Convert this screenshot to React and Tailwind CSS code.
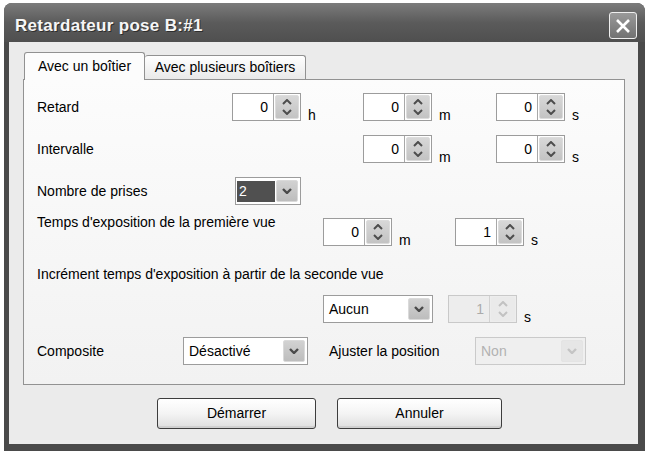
import React from 'react';

// Small XP-style widgets, greyscale

function ChevronUp({ color = '#4a4a4a' }) {
  return (
    <svg width="10" height="6" viewBox="0 0 10 6">
      <path d="M1 5 L5 1 L9 5" fill="none" stroke={color} strokeWidth="2" />
    </svg>
  );
}

function ChevronDown({ color = '#4a4a4a', width = 2 }) {
  return (
    <svg width="10" height="6" viewBox="0 0 10 6">
      <path d="M1 1 L5 5 L9 1" fill="none" stroke={color} strokeWidth={width} />
    </svg>
  );
}

function Spin({ value, disabled }) {
  return (
    <div
      className={
        disabled
          ? 'flex h-[28px] w-[69px] shrink-0 border border-[#c9c9c9] bg-[#ededed]'
          : 'flex h-[28px] w-[69px] shrink-0 border border-[#9c9c9c] bg-white'
      }
    >
      <div
        className={
          disabled
            ? 'flex flex-1 items-center justify-end pr-[5px] text-[14px] text-[#ababab]'
            : 'flex flex-1 items-center justify-end pr-[5px] text-[14px] text-black'
        }
      >
        {value}
      </div>
      <div
        className={
          disabled
            ? 'flex w-[27px] border-l border-[#d2d2d2] p-[1px]'
            : 'flex w-[27px] border-l border-[#a8a8a8] p-[1px]'
        }
      >
        <div
          className={
            disabled
              ? 'flex flex-1 flex-col items-center justify-center gap-[4px] rounded-[2px] bg-[#eaeaea]'
              : 'flex flex-1 flex-col items-center justify-center gap-[4px] rounded-[2px] border border-[#dcdcdc] bg-linear-to-b from-[#d8d8d8] to-[#c3c3c3]'
          }
        >
          <ChevronUp color={disabled ? '#c2c2c2' : '#4d4d4d'} />
          <ChevronDown color={disabled ? '#c2c2c2' : '#4d4d4d'} />
        </div>
      </div>
    </div>
  );
}

function Unit({ children }) {
  return <span className="ml-[7px] self-end translate-y-[1px] text-[14px] leading-none">{children}</span>;
}

function Select({ value, w, highlighted, disabled }) {
  return (
    <div
      className={
        disabled
          ? `flex h-[28px] shrink-0 border border-[#cacaca] bg-[#efefef] ${w}`
          : `flex h-[28px] shrink-0 border border-[#9c9c9c] bg-white ${w}`
      }
    >
      <div className="flex flex-1 items-center pl-[1px]">
        {highlighted ? (
          <span className="flex h-[21px] w-[38px] items-center bg-[#505050] pl-[2px] text-[14px] text-white">{value}</span>
        ) : (
          <span className={disabled ? 'pl-[4px] text-[14px] text-[#b2b2b2]' : 'pl-[4px] text-[14px] text-black'}>{value}</span>
        )}
      </div>
      <div
        className={
          disabled
            ? 'my-[2px] mr-[2px] flex w-[22px] items-center justify-center rounded-[2px] border border-[#e4e4e4] bg-[#e6e6e6]'
            : 'my-[2px] mr-[2px] flex w-[22px] items-center justify-center rounded-[2px] border border-[#dadada] bg-linear-to-b from-[#d2d2d2] to-[#bdbdbd]'
        }
      >
        <ChevronDown color={disabled ? '#c4c4c4' : '#4a4a4a'} width={2.4} />
      </div>
    </div>
  );
}

function Button({ children, w }) {
  return (
    <button
      className={`flex h-[31px] items-center justify-center rounded-[3px] border border-[#3d3d3d] bg-linear-to-b from-white via-[#f4f4f4] to-[#dedede] text-[14px] text-black shadow-[inset_0_-2px_0_#d0d0d0] ${w}`}
    >
      {children}
    </button>
  );
}

export default function App() {
  return (
    <div className="h-[451px] w-[645px] overflow-hidden bg-white pl-[4px] pt-[3px] font-['Liberation_Sans',Arial,sans-serif] text-black">
      <div className="flex h-[448px] w-[641px] flex-col overflow-hidden rounded-t-[8px] bg-[#4a4a4a]">
        {/* title bar */}
        <div className="flex h-[39px] shrink-0 items-center bg-linear-to-b from-[#7c7c7c] via-[#5b5b5b] to-[#4f4f4f] pl-[11px] pr-[8px] pt-[6px]">
          <span className="flex-1 text-[17px] font-bold tracking-[0.3px] text-[#f6f6f6] [text-shadow:1px_1px_0_#2e2e2e]">
            Retardateur pose B:#1
          </span>
          <div className="flex h-[27px] w-[28px] items-center justify-center rounded-[3px] border border-[#efefef] bg-linear-to-b from-[#9a9a9a] to-[#727272]">
            <svg width="16" height="16" viewBox="0 0 16 16">
              <path d="M2 2 L14 14 M14 2 L2 14" stroke="#ffffff" strokeWidth="2.6" />
            </svg>
          </div>
        </div>

        {/* body */}
        <div className="mb-[7px] ml-[5px] mr-[7px] flex flex-1 flex-col bg-[#ebebeb]">
          {/* tabs */}
          <div className="ml-[15px] mt-[10px] flex h-[27px] items-end">
            <div className="relative z-10 -mb-[1px] flex h-[28px] w-[121px] items-center justify-center rounded-t-[3px] border-x border-t border-[#919191] bg-[#fcfcfc] pb-[1px] text-[14px]">
              Avec un boîtier
            </div>
            <div className="flex h-[24px] w-[161px] items-center justify-center rounded-t-[3px] border-r border-t border-[#919191] bg-linear-to-b from-white to-[#e9e9e9] text-[14px]">
              Avec plusieurs boîtiers
            </div>
          </div>

          {/* panel */}
          <div className="ml-[14px] flex h-[306px] w-[602px] flex-col border border-[#929292] bg-linear-to-b from-[#fcfcfc] to-[#f2f2f2] pl-[13px] pt-[13px] text-[14px]">
            <div className="flex h-[28px] items-center">
              <span className="w-[195px] shrink-0">Retard</span>
              <div className="flex w-[131px] shrink-0">
                <Spin value="0" />
                <Unit>h</Unit>
              </div>
              <div className="flex w-[133px] shrink-0">
                <Spin value="0" />
                <Unit>m</Unit>
              </div>
              <div className="flex">
                <Spin value="0" />
                <Unit>s</Unit>
              </div>
            </div>

            <div className="mt-[14px] flex h-[28px] items-center">
              <span className="w-[326px] shrink-0">Intervalle</span>
              <div className="flex w-[133px] shrink-0">
                <Spin value="0" />
                <Unit>m</Unit>
              </div>
              <div className="flex">
                <Spin value="0" />
                <Unit>s</Unit>
              </div>
            </div>

            <div className="mt-[14px] flex h-[28px] items-center">
              <span className="w-[198px] shrink-0">Nombre de prises</span>
              <Select value="2" w="w-[66px]" highlighted />
            </div>

            <div className="mt-[13px] flex h-[28px] items-start">
              <span className="-mt-[4px] w-[286px] shrink-0 leading-[16px]">Temps d'exposition de la première vue</span>
              <div className="flex h-[28px] w-[132px] shrink-0">
                <Spin value="0" />
                <Unit>m</Unit>
              </div>
              <div className="flex h-[28px]">
                <Spin value="1" />
                <Unit>s</Unit>
              </div>
            </div>

            <div className="mt-[20px] leading-[16px]">Incrément temps d'exposition à partir de la seconde vue</div>

            <div className="ml-[286px] mt-[13px] flex h-[28px]">
              <Select value="Aucun" w="w-[110px]" />
              <div className="ml-[15px] flex">
                <Spin value="1" disabled />
                <Unit>s</Unit>
              </div>
            </div>

            <div className="mt-[14px] flex h-[28px] items-center">
              <span className="w-[146px] shrink-0">Composite</span>
              <Select value="Désactivé" w="w-[125px]" />
              <span className="ml-[21px] w-[146px] shrink-0">Ajuster la position</span>
              <Select value="Non" w="w-[111px]" disabled />
            </div>
          </div>

          {/* actions */}
          <div className="ml-[148px] mt-[13px] flex gap-[21px]">
            <Button w="w-[159px]">Démarrer</Button>
            <Button w="w-[165px]">Annuler</Button>
          </div>
        </div>
      </div>
    </div>
  );
}
